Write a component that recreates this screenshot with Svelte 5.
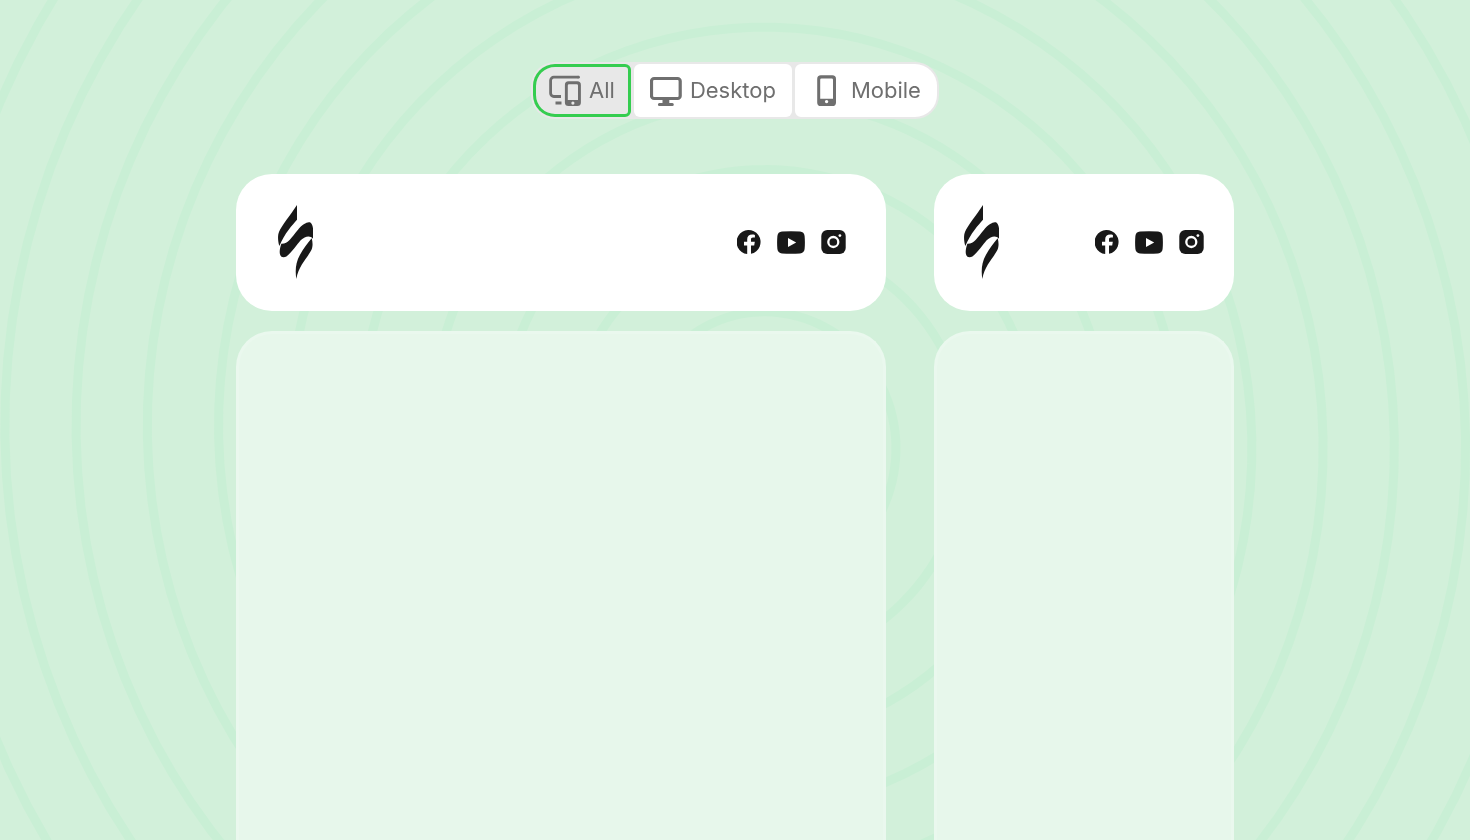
<script>
  const views = ['All', 'Desktop', 'Mobile'];
  let active = $state('All');

  // Archimedean spiral behind the page: radius grows by `pitch` each clockwise turn.
  const centre = { x: 753, y: 437 };
  const pitch = 71.25;
  const turns = 15;
  const steps = 120;

  function spiral() {
    const points = [];
    for (let i = 0; i <= turns * steps; i++) {
      const turn = i / steps;
      const angle = turn * 2 * Math.PI;
      const x = centre.x + pitch * turn * Math.cos(angle);
      const y = centre.y + pitch * turn * Math.sin(angle);
      points.push(`${x.toFixed(2)} ${y.toFixed(2)}`);
    }
    return 'M' + points.join('L');
  }
</script>

{#snippet viewIcon(name)}
  {#if name === 'All'}
    <svg class="view-icon" viewBox="0.500 0 32 32" aria-hidden="true">
      <path d="M30 2.200H5.300a3.200 3.200 0 0 0-3.200 3.200v12.900a3.200 3.200 0 0 0 3.200 3.200h7.200M7 28h6" fill="none" stroke="currentColor" stroke-width="2.800" />
      <circle cx="30" cy="2.200" r="1.400" fill="currentColor" />
      <path fill="currentColor" fill-rule="evenodd" d="M20 6.300h8.800a3.600 3.600 0 0 1 3.600 3.600v17.600a3.600 3.600 0 0 1-3.600 3.600H20a3.600 3.600 0 0 1-3.600-3.600V9.900A3.600 3.600 0 0 1 20 6.300zM20.500 9.200a1.200 1.200 0 0 0-1.200 1.200V25h10.200V10.400a1.200 1.200 0 0 0-1.200-1.200zM24.400 26.500a1.600 1.600 0 1 0 0 3.200a1.600 1.600 0 1 0 0-3.200z" />
    </svg>
  {:else if name === 'Desktop'}
    <svg class="view-icon" viewBox="0 0 32 32" aria-hidden="true">
      <rect x="1.500" y="3.500" width="28.700" height="20" rx="2.600" fill="none" stroke="currentColor" stroke-width="3.200" />
      <path d="M12.500 24.500h6.800v3.500h3a1.500 1.500 0 0 1 0 3H9.400a1.500 1.500 0 0 1 0-3h3.100z" fill="currentColor" />
    </svg>
  {:else}
    <svg class="view-icon" viewBox="0 0 32 32" aria-hidden="true">
      <path fill="currentColor" fill-rule="evenodd" d="M9.900 0.200h11.400a3.700 3.700 0 0 1 3.700 3.700v23.500a3.700 3.700 0 0 1-3.700 3.700H9.900a3.700 3.700 0 0 1-3.700-3.700V3.900A3.700 3.700 0 0 1 9.900 0.200zM10.500 3.400a1.300 1.300 0 0 0-1.300 1.300V23.800h12.800V4.700a1.300 1.300 0 0 0-1.300-1.300zM15.600 24.900a1.700 1.700 0 1 0 0 3.400a1.700 1.700 0 1 0 0-3.400z" />
    </svg>
  {/if}
{/snippet}

{#snippet siteHeader()}
  <svg class="logo" viewBox="18 14 105 222" role="img" aria-label="Logo">
    <path d="M75 14V58C62 73 38 98 22 137C17 122 17 104 21 95C28 78 55 44 75 14Z" />
    <path d="M28 130C48 131 58 112 78 88C92 71 108 62 116 67C124 74 125 94 123 115C115 105 100 106 86 120C70 138 50 171 35 171C20 171 21 150 28 130Z" />
    <path d="M119 114C123 128 123 141 116 153C104 175 80 196 73 236C69 210 71 186 84 163C94 145 107 129 119 114Z" />
  </svg>
  <nav class="social" aria-label="Social">
    <a href="#facebook" aria-label="Facebook">
      <svg width="24" height="24" viewBox="0 0 24 24">
        <path d="M10.200 24A12 12 0 1 1 14 23.830V15.400h3.200l.6-3.600H14V9.500c0-1.200.6-1.900 2-1.900h1.900V4.900c-.8-.2-1.700-.3-2.700-.3c-3.200 0-5 1.800-5 4.700v2.500H7v3.600h3.200z" />
      </svg>
    </a>
    <a href="#youtube" aria-label="YouTube">
      <svg width="28" height="24" viewBox="0 0 28 24">
        <path fill-rule="evenodd" d="M5 1.600Q14 .8 23 1.600Q27.200 2 27.600 6Q28.200 12.500 27.600 19Q27.200 23 23 23.400Q14 24.100 5 23.400Q.8 23 .4 19Q-.2 12.500 .4 6Q.8 2 5 1.600zM11 7.900V17.100L19.200 12.500z" />
      </svg>
    </a>
    <a href="#instagram" aria-label="Instagram">
      <svg width="25" height="24" viewBox="0 0 25 24">
        <rect x=".3" width="24.400" height="24" rx="6" />
        <circle cx="12.300" cy="12" r="5" fill="none" stroke="#fff" stroke-width="2.300" />
        <circle cx="18.900" cy="5.600" r="1.400" fill="#fff" />
      </svg>
    </a>
  </nav>
{/snippet}

<svg class="backdrop" viewBox="0 0 1470 840" preserveAspectRatio="xMidYMid slice" aria-hidden="true">
  <path d={spiral()} />
</svg>

<main>
  <div class="switcher" role="group" aria-label="Preview">
    {#each views as view}
      <button type="button" class:active={active === view} aria-pressed={active === view} onclick={() => (active = view)}>
        {@render viewIcon(view)}
        <span>{view}</span>
      </button>
    {/each}
  </div>

  <div class="previews">
    <section class="preview wide" aria-label="Desktop preview">
      <header class="card">{@render siteHeader()}</header>
      <div class="panel"></div>
    </section>
    <section class="preview" aria-label="Mobile preview">
      <header class="card">{@render siteHeader()}</header>
      <div class="panel"></div>
    </section>
  </div>
</main>

<style>
  :global(body) {
    margin: 0;
    background: #d2f0da;
    font-family: Inter, 'Liberation Sans', sans-serif;
  }

  .backdrop {
    position: fixed;
    inset: 0;
    z-index: -1;
    width: 100%;
    height: 100%;
  }

  .backdrop path {
    fill: none;
    stroke: #c9efd5;
    stroke-width: 9;
  }

  main {
    box-sizing: border-box;
    min-height: 100vh;
    padding: 62px 24px 0;
    display: flex;
    flex-direction: column;
    align-items: center;
    gap: 55px;
  }

  .switcher {
    display: flex;
    gap: 3px;
    padding: 2px;
    border-radius: 24px;
    background: #e8e8e8;
  }

  button {
    display: flex;
    align-items: center;
    gap: 8px;
    padding: 10px 16px;
    border: 0;
    border-radius: 6px;
    background: #fff;
    color: #6f6f6f;
    font-family: inherit;
    font-size: 22px;
    line-height: 33px;
    cursor: pointer;
  }

  button:first-child {
    border-top-left-radius: 22px;
    border-bottom-left-radius: 22px;
  }

  button:last-child {
    border-top-right-radius: 22px;
    border-bottom-right-radius: 22px;
  }

  button.active {
    background: #e8e8e8;
    box-shadow: inset 0 0 0 3px #35cd50;
  }

  .view-icon {
    width: 32px;
    height: 32px;
  }

  .previews {
    flex: 1;
    width: 100%;
    max-width: 998px;
    display: grid;
    grid-template-columns: 650fr 300fr;
    gap: 48px;
  }

  .preview {
    display: flex;
    flex-direction: column;
    gap: 20px;
  }

  .card {
    display: flex;
    align-items: center;
    justify-content: space-between;
    padding: 31px 30px 32px;
    border-radius: 36px;
    background: #fff;
  }

  .wide .card {
    padding-left: 42px;
    padding-right: 40px;
  }

  .logo {
    width: 35px;
    height: 74px;
    fill: #181818;
  }

  .social {
    display: flex;
    align-items: center;
    gap: 16px;
  }

  .social a {
    display: flex;
  }

  .social svg {
    fill: #181818;
  }

  .panel {
    flex: 1;
    border: 3px solid #eaf8ee;
    border-bottom: 0;
    border-radius: 36px 36px 0 0;
    background: #e7f7eb;
  }
</style>
